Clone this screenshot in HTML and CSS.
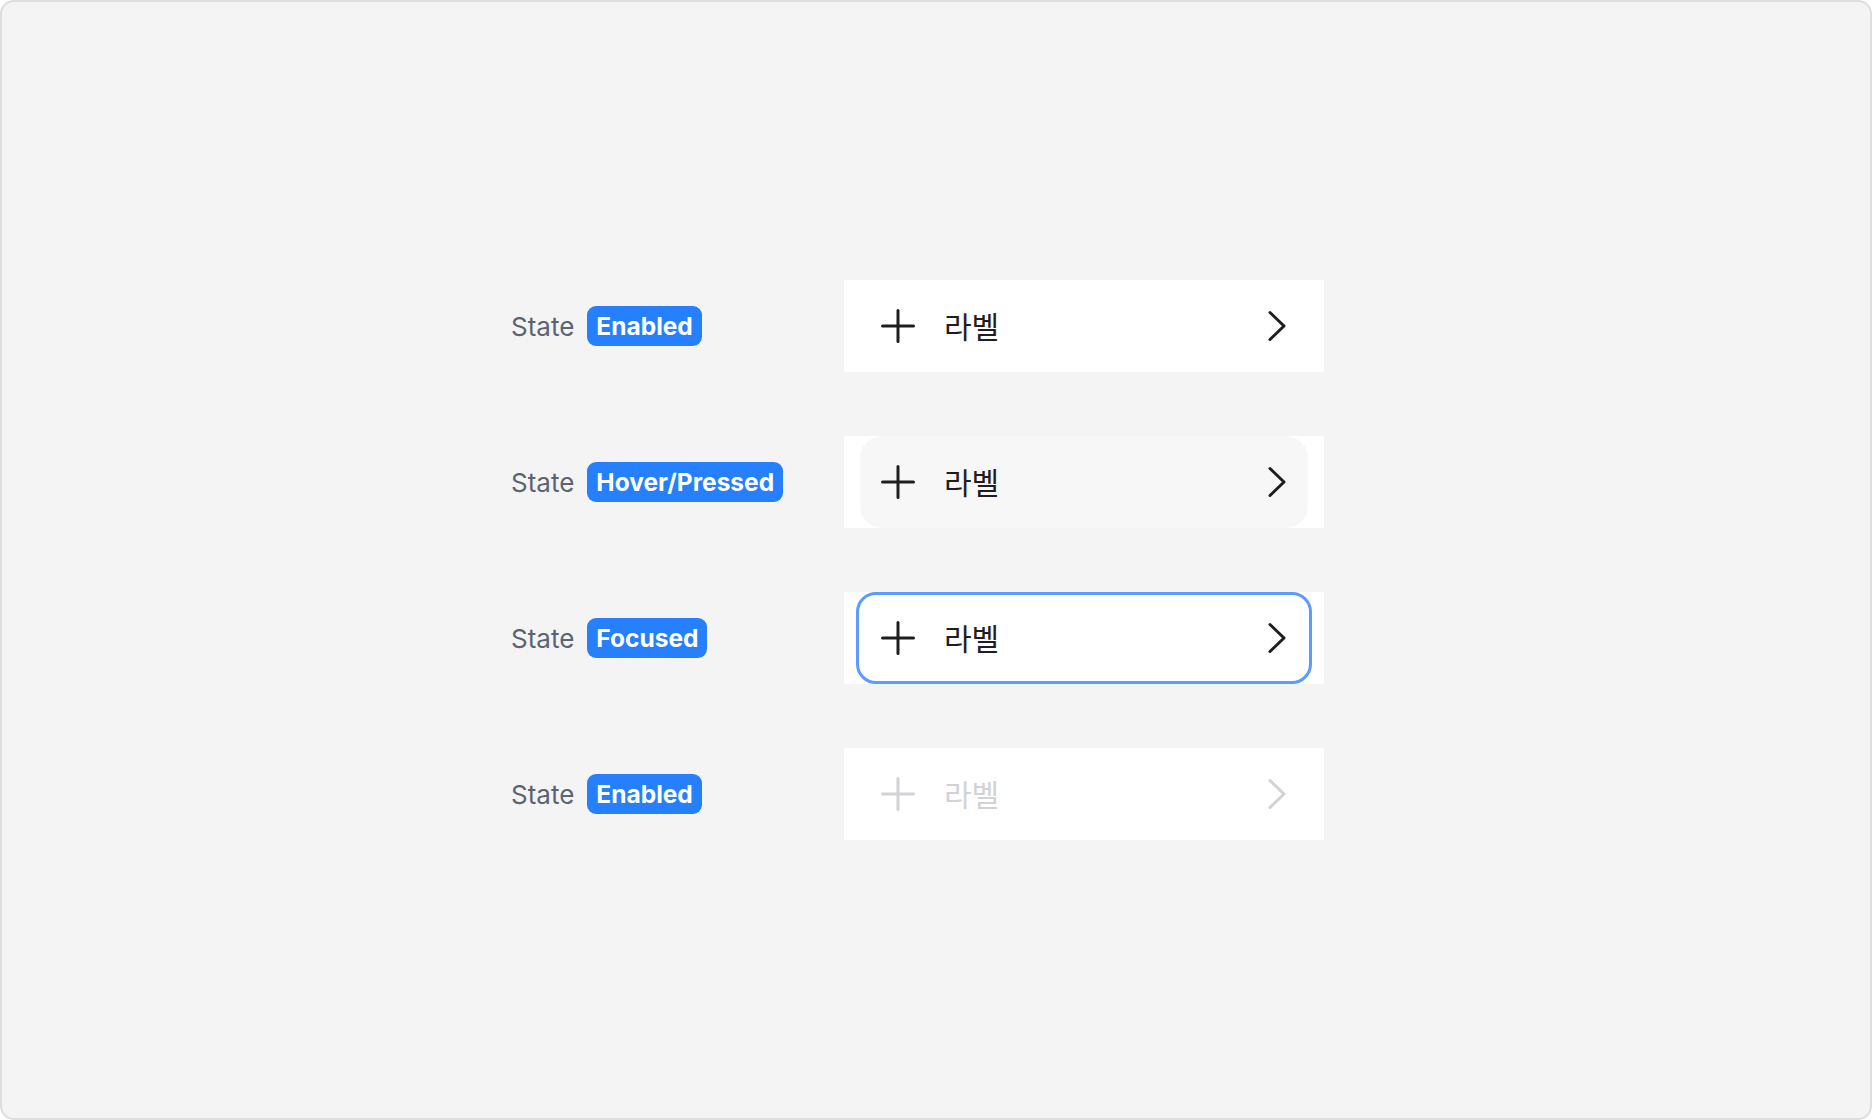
FILE: index.html
```html
<!DOCTYPE html>
<html lang="ko">
<head>
<meta charset="utf-8">
<link rel="stylesheet" href="styles.css">
</head>
<body>
<div class="frame">
  <div class="rows">
    <div class="row">
      <div class="state"><span class="state-text">State</span><span class="badge">Enabled</span></div>
      <div class="cell">
        <div class="item">
          <svg class="plus" width="34" height="34" viewBox="0 0 34 34"><path d="M17 1.5V32.5M1.5 17H32.5" /></svg>
          <span class="label">라벨</span>
          <svg class="chev" width="20" height="32" viewBox="0 0 20 32"><path d="M3 2.5L17 16L3 29.5" /></svg>
        </div>
      </div>
    </div>
    <div class="row">
      <div class="state"><span class="state-text">State</span><span class="badge">Hover/Pressed</span></div>
      <div class="cell">
        <div class="item item-hover">
          <svg class="plus" width="34" height="34" viewBox="0 0 34 34"><path d="M17 1.5V32.5M1.5 17H32.5" /></svg>
          <span class="label">라벨</span>
          <svg class="chev" width="20" height="32" viewBox="0 0 20 32"><path d="M3 2.5L17 16L3 29.5" /></svg>
        </div>
      </div>
    </div>
    <div class="row">
      <div class="state"><span class="state-text">State</span><span class="badge">Focused</span></div>
      <div class="cell">
        <div class="item item-focus">
          <svg class="plus" width="34" height="34" viewBox="0 0 34 34"><path d="M17 1.5V32.5M1.5 17H32.5" /></svg>
          <span class="label">라벨</span>
          <svg class="chev" width="20" height="32" viewBox="0 0 20 32"><path d="M3 2.5L17 16L3 29.5" /></svg>
        </div>
      </div>
    </div>
    <div class="row">
      <div class="state"><span class="state-text">State</span><span class="badge">Enabled</span></div>
      <div class="cell">
        <div class="item item-disabled">
          <svg class="plus" width="34" height="34" viewBox="0 0 34 34"><path d="M17 1.5V32.5M1.5 17H32.5" /></svg>
          <span class="label">라벨</span>
          <svg class="chev" width="20" height="32" viewBox="0 0 20 32"><path d="M3 2.5L17 16L3 29.5" /></svg>
        </div>
      </div>
    </div>
  </div>
</div>
</body>
</html>
```
FILE: styles.css
```css
html, body {
  margin: 0;
  padding: 0;
  background: #ffffff;
}
.frame {
  width: 1872px;
  height: 1120px;
  box-sizing: border-box;
  border: 2px solid #dedede;
  border-radius: 14px;
  background: #f4f4f4;
  display: flex;
  align-items: center;
  padding-left: 509px;
  font-family: Inter, "Noto Sans CJK KR", sans-serif;
}
.rows {
  display: flex;
  flex-direction: column;
  gap: 64px;
}
.row {
  display: flex;
  align-items: center;
}
.state {
  width: 333px;
  display: flex;
  align-items: center;
}
.state-text {
  font-size: 26px;
  color: #5c6370;
  margin-right: 13px;
}
.badge {
  height: 40px;
  line-height: 40px;
  padding: 0 9px 0 9px;
  border-radius: 9px;
  background: #2680fd;
  color: #ffffff;
  font-weight: 700;
  font-size: 24.5px;
}
.cell {
  width: 480px;
  height: 92px;
  background: #ffffff;
  display: flex;
}
.item {
  flex: 1;
  display: flex;
  align-items: center;
  padding: 0 37px 0 37px;
  box-sizing: border-box;
}
.item-hover {
  margin: 0 16px;
  padding: 0 21px;
  background: #f7f7f7;
  border-radius: 22px;
}
.item-focus {
  margin: 0 12px;
  padding: 0 22px;
  border: 3px solid #5c9bff;
  border-radius: 20px;
}
.plus path, .chev path {
  fill: none;
  stroke: #1e1e20;
  stroke-width: 3;
  stroke-linecap: round;
  stroke-linejoin: round;
}
.label {
  margin-left: 29px;
  margin-top: -2px;
  font-family: "Noto Sans CJK KR", sans-serif;
  font-size: 30px;
  color: #1e1e20;
  flex: 1;
}
.item-disabled .plus path, .item-disabled .chev path {
  stroke: #d2d2d6;
}
.item-disabled .label {
  color: #d2d2d6;
}
```
